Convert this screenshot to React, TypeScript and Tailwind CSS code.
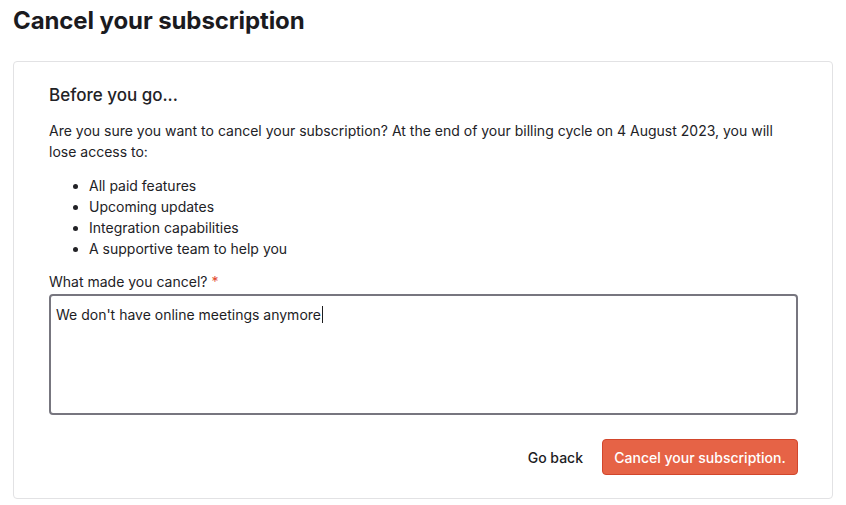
import React from 'react';

const losses = [
  'All paid features',
  'Upcoming updates',
  'Integration capabilities',
  'A supportive team to help you',
];

const App: React.FC = () => {
  return (
    <div
      className="min-h-screen bg-white px-[13px] pt-[5px] pb-[6px] text-[#1d1d1f]"
      style={{ fontFamily: 'Inter, "Liberation Sans", sans-serif' }}
    >
      <h1 className="text-[24px] leading-[32px] font-bold tracking-[-0.1px] text-[#1b1b1f]">
        Cancel your subscription
      </h1>

      <div className="mt-[24px] rounded-[4px] border border-[#e2e2e4] pt-[21px] pb-[23px] pl-[35px] pr-[34px]">
        <h2 className="text-[17px] leading-[24px] font-medium text-[#222226]">Before you go...</h2>

        <p className="mt-[13px] text-[14px] leading-[21px] text-[#222226]">
          Are you sure you want to cancel your subscription? At the end of your billing cycle on 4 August 2023, you will lose access to:
        </p>

        <ul className="mt-[13px] list-disc pl-[40px] text-[14px] leading-[21px] text-[#222226]">
          {losses.map((item) => (
            <li key={item}>{item}</li>
          ))}
        </ul>

        <label className="mt-[12px] block text-[14px] leading-[21px] text-[#222226]">
          What made you cancel? <span className="text-[#e2492d]">*</span>
        </label>

        <div className="mt-[2px] h-[121px] rounded-[4px] border-2 border-[#77767f] px-[5px] py-[7px] text-[14px] leading-[21px] text-[#1d1d1f]">
          We don't have online meetings anymore
          <span className="ml-[1px] inline-block h-[17px] w-px translate-y-[3px] bg-[#1d1d1f] align-baseline" />
        </div>

        <div className="mt-[24px] flex items-center justify-end gap-[19px]">
          <button className="text-[14px] leading-[21px] font-medium text-[#1d1d1f]">Go back</button>
          <button className="h-[36px] w-[196px] rounded-[4px] border border-[#d2462c] bg-[#e66346] text-[14px] font-medium text-white">
            Cancel your subscription.
          </button>
        </div>
      </div>
    </div>
  );
};

export default App;
